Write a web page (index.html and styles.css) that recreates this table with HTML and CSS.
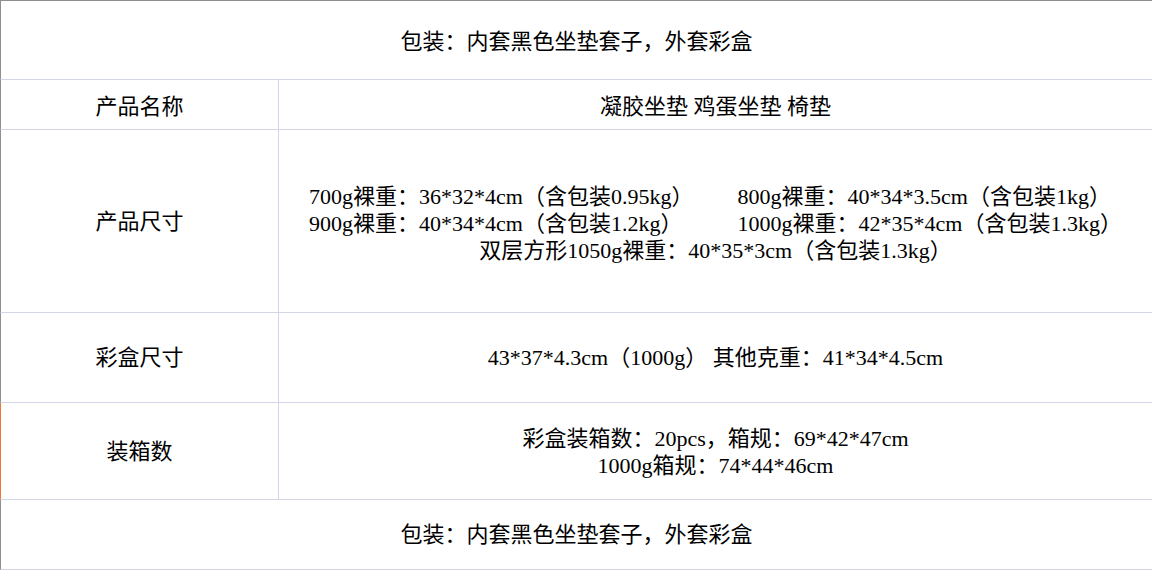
FILE: index.html
```html
<!DOCTYPE html>
<html lang="zh-CN">
<head>
<meta charset="utf-8">
<title>产品参数</title>
<link rel="stylesheet" href="styles.css">
</head>
<body>
<div class="sheet">
  <div class="row row-full row-pack-top">
    <div class="cell cell-wide">包装：内套黑色坐垫套子，外套彩盒</div>
  </div>
  <div class="row row-name">
    <div class="cell label">产品名称</div>
    <div class="cell value">凝胶坐垫 鸡蛋坐垫 椅垫</div>
  </div>
  <div class="row row-size">
    <div class="cell label">产品尺寸</div>
    <div class="cell value">
      <div class="sizes">
        <div class="size-grid">
          <span>700g裸重：36*32*4cm（含包装0.95kg）</span>
          <span>800g裸重：40*34*3.5cm（含包装1kg）</span>
          <span>900g裸重：40*34*4cm（含包装1.2kg）</span>
          <span>1000g裸重：42*35*4cm（含包装1.3kg）</span>
        </div>
        <div class="size-line">双层方形1050g裸重：40*35*3cm（含包装1.3kg）</div>
      </div>
    </div>
  </div>
  <div class="row row-box">
    <div class="cell label">彩盒尺寸</div>
    <div class="cell value">43*37*4.3cm（1000g）&nbsp;其他克重：41*34*4.5cm</div>
  </div>
  <div class="row row-carton">
    <div class="cell label">装箱数</div>
    <div class="cell value">
      <div class="lines">
        <div>彩盒装箱数：20pcs，箱规：69*42*47cm</div>
        <div>1000g箱规：74*44*46cm</div>
      </div>
    </div>
  </div>
  <div class="row row-full row-pack-bottom">
    <div class="cell cell-wide">包装：内套黑色坐垫套子，外套彩盒</div>
  </div>
</div>
</body>
</html>
```

FILE: styles.css
```css
* {
  box-sizing: border-box;
}

html, body {
  margin: 0;
  padding: 0;
  background: #ffffff;
}

body {
  width: 1152px;
  height: 570px;
  overflow: hidden;
  font-family: "Liberation Serif", "Noto Sans CJK SC", serif;
  font-size: 22px;
  color: #000000;
}

.sheet {
  width: 1152px;
  border-top: 1px solid #8e8e8e;
}

.row {
  display: grid;
  grid-template-columns: 278px 1fr;
  border-left: 1px solid #8e8e8e;
  border-bottom: 1px solid #d2d6e6;
}

.row-full {
  grid-template-columns: 1fr;
}

.row-pack-top { height: 79px; }
.row-name { height: 50px; }
.row-size { height: 183px; }
.row-box { height: 90px; }
.row-carton {
  height: 97px;
  border-left-color: #ec7a34;
}
.row-pack-bottom { height: 70px; }

.cell {
  display: flex;
  align-items: center;
  justify-content: center;
  text-align: center;
  line-height: 27px;
  white-space: nowrap;
}

.label {
  border-right: 1px solid #d2d6e6;
}

.row-name .cell,
.row-pack-top .cell {
  padding-top: 3px;
}

.sizes {
  display: flex;
  flex-direction: column;
  align-items: center;
  padding-top: 4px;
}

.size-grid {
  display: grid;
  grid-template-columns: auto auto;
  column-gap: 44px;
  text-align: left;
}

.lines {
  display: flex;
  flex-direction: column;
  align-items: center;
  padding-top: 2px;
}
```
